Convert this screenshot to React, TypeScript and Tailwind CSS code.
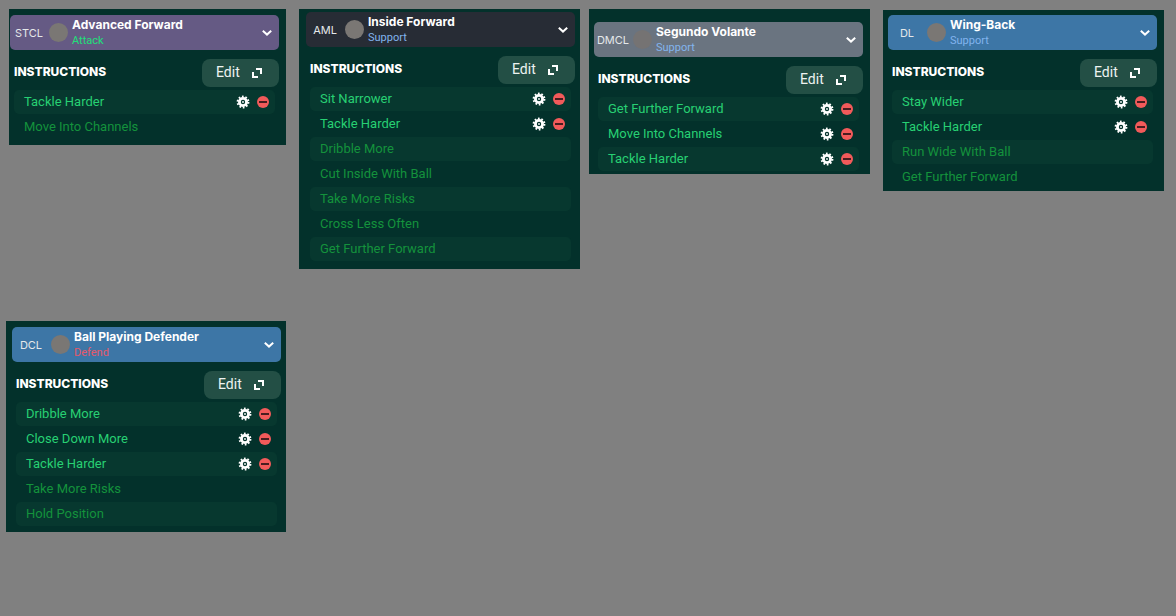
import React from "react";
import clsx from "clsx";

type Duty = "Attack" | "Support" | "Defend";

interface Instruction {
  name: string;
  locked?: boolean;
}

interface PlayerRole {
  position: string;
  role: string;
  duty: Duty;
  headerClass: string;
  badgeClass: string;
  panelClass: string;
  instructions: Instruction[];
}

const dutyColors: Record<Duty, string> = {
  Attack: "text-[#1fe07a]",
  Support: "text-[#82b4ee]",
  Defend: "text-[#e4596b]",
};

const roles: PlayerRole[] = [
  {
    position: "STCL",
    role: "Advanced Forward",
    duty: "Attack",
    headerClass: "bg-[#655a84]",
    badgeClass: "bg-[#7a7774]",
    panelClass: "ml-[3px] mr-1 pl-px pr-[7px] pt-1.5 pb-1.5",
    instructions: [
      { name: "Tackle Harder" },
      { name: "Move Into Channels", locked: true },
    ],
  },
  {
    position: "AML",
    role: "Inside Forward",
    duty: "Support",
    headerClass: "bg-[#272c35]",
    badgeClass: "bg-[#7a7774]",
    panelClass: "pl-[7px] pr-[5px] pt-[3px] pb-2",
    instructions: [
      { name: "Sit Narrower" },
      { name: "Tackle Harder" },
      { name: "Dribble More", locked: true },
      { name: "Cut Inside With Ball", locked: true },
      { name: "Take More Risks", locked: true },
      { name: "Cross Less Often", locked: true },
      { name: "Get Further Forward", locked: true },
    ],
  },
  {
    position: "DMCL",
    role: "Segundo Volante",
    duty: "Support",
    headerClass: "bg-[#6a7480]",
    badgeClass: "bg-[#757373]",
    panelClass: "mr-1 pl-[5px] pr-[7px] pt-[13px] pb-[3px]",
    instructions: [
      { name: "Get Further Forward" },
      { name: "Move Into Channels" },
      { name: "Tackle Harder" },
    ],
  },
  {
    position: "DL",
    role: "Wing-Back",
    duty: "Support",
    headerClass: "bg-[#3d76a6]",
    badgeClass: "bg-[#7a7774]",
    panelClass: "mt-px pl-[5px] pr-[7px] pt-[5px] pb-0.5",
    instructions: [
      { name: "Stay Wider" },
      { name: "Tackle Harder" },
      { name: "Run Wide With Ball", locked: true },
      { name: "Get Further Forward", locked: true },
    ],
  },
  {
    position: "DCL",
    role: "Ball Playing Defender",
    duty: "Defend",
    headerClass: "bg-[#3d76a6]",
    badgeClass: "bg-[#7a7774]",
    panelClass: "mr-1 pl-1.5 pr-[5px] pt-1.5 pb-1.5",
    instructions: [
      { name: "Dribble More" },
      { name: "Close Down More" },
      { name: "Tackle Harder" },
      { name: "Take More Risks", locked: true },
      { name: "Hold Position", locked: true },
    ],
  },
];

const ChevronIcon = () => (
  <svg width="10" height="6" viewBox="0 0 10 6" fill="none" aria-hidden="true">
    <path d="M0.8 0.8 5 4.6 9.2 0.8" stroke="#fff" strokeWidth="2" />
  </svg>
);

const ExpandIcon = () => (
  <svg width="10" height="10" viewBox="0 0 10 10" fill="none" aria-hidden="true">
    <path d="M4 1H9V6M1 4V9H6" stroke="#fff" strokeWidth="2" />
  </svg>
);

const GearIcon = () => (
  <svg width="12" height="12" viewBox="0 0 12 12" fill="none" aria-hidden="true" className="overflow-visible">
    <circle cx="6" cy="6" r="5.4" stroke="#fff" strokeWidth="2" strokeDasharray="1.7 1.693" />
    <circle cx="6" cy="6" r="3.6" stroke="#fff" strokeWidth="2.8" />
    <circle cx="6" cy="6" r="0.9" fill="#fff" />
  </svg>
);

const RemoveIcon = () => (
  <svg width="12" height="12" viewBox="0 0 12 12" aria-hidden="true">
    <circle cx="6" cy="6" r="6" fill="#f25a5a" />
    <rect x="2" y="5" width="8" height="2" fill="#4a1d20" />
  </svg>
);

const RolePanel: React.FC<{ data: PlayerRole }> = ({ data }) => {
  return (
    <section className={clsx("bg-[#03312b]", data.panelClass)}>
      {/* Role selector */}
      <button
        type="button"
        aria-haspopup="listbox"
        className={clsx(
          "flex h-[35px] w-full items-center rounded-[5px] pr-[7px] text-left",
          data.headerClass
        )}
      >
        <span className="w-[38px] shrink-0 pt-px text-center font-['Inter',sans-serif] text-[11px] text-[#e4e8ea]">
          {data.position}
        </span>
        <span
          className={clsx("ml-px size-[19px] shrink-0 rounded-full", data.badgeClass)}
        />
        <span className="ml-1 flex grow flex-col pt-px">
          <span className="font-['Inter',sans-serif] text-[12px] leading-4 font-bold text-white">
            {data.role}
          </span>
          <span className={clsx("text-[11px] leading-4", dutyColors[data.duty])}>
            {data.duty}
          </span>
        </span>
        <ChevronIcon />
      </button>

      {/* Title and edit */}
      <div className="mt-[9px] flex items-center justify-between pl-1">
        <h2 className="pb-0.5 font-['Inter',sans-serif] text-[12px] leading-4 font-extrabold text-white">
          INSTRUCTIONS
        </h2>
        <button
          type="button"
          className="flex h-7 w-[77px] items-center justify-between rounded-lg bg-[#234f45] pr-[17px] pl-3.5 text-[14px] text-[#edf3f1]"
        >
          <span className="pb-0.5">Edit</span>
          <ExpandIcon />
        </button>
      </div>

      <ul className="mt-[3px] flex flex-col gap-px px-1">
        {data.instructions.map((item) => (
          <li
            key={item.name}
            className="flex h-6 items-center rounded-[5px] pr-1.5 pl-2.5 odd:bg-[#07382f]"
          >
            <span
              className={clsx(
                "grow text-[13px]",
                item.locked ? "text-[#14923c]" : "text-[#27d073]"
              )}
            >
              {item.name}
            </span>
            {!item.locked && (
              <span className="flex items-center gap-2">
                <button type="button" aria-label={`Configure ${item.name}`}>
                  <GearIcon />
                </button>
                <button type="button" aria-label={`Remove ${item.name}`}>
                  <RemoveIcon />
                </button>
              </span>
            )}
          </li>
        ))}
      </ul>
    </section>
  );
};

const App: React.FC = () => {
  return (
    <main className="grid min-h-screen grid-cols-[284fr_281fr_285fr_281fr] content-start items-start gap-x-[9px] gap-y-[52px] bg-[#808080] pt-[9px] pr-3 pb-6 pl-1.5 font-['Roboto',sans-serif]">
      {roles.map((role) => (
        <RolePanel key={role.position} data={role} />
      ))}
    </main>
  );
};

export default App;
